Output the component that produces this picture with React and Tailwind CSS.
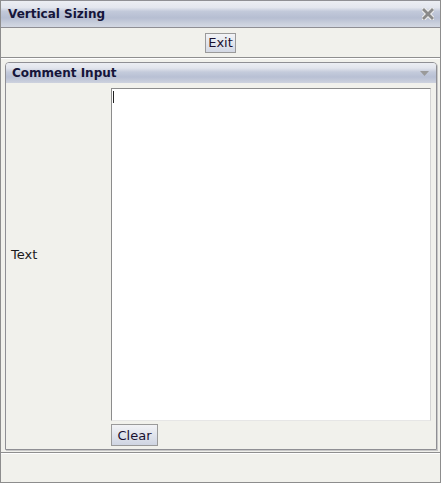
import React from "react";

const font = { fontFamily: '"DejaVu Sans", Verdana, sans-serif' };

function CloseIcon() {
  return (
    <svg width="12" height="12" viewBox="0 0 12 12">
      <path d="M2 2 L10 10 M10 2 L2 10" stroke="#ededed" strokeWidth="5" strokeLinecap="square" />
      <path d="M2 2 L10 10 M10 2 L2 10" stroke="#8a8a8a" strokeWidth="2.8" strokeLinecap="square" />
    </svg>
  );
}

function Tri() {
  return (
    <svg width="9" height="5" viewBox="0 0 9 5">
      <path d="M0 0 L9 0 L4.5 5 Z" fill="#9a9a9a" />
    </svg>
  );
}

export default function App() {
  return (
    <div
      className="w-[441px] h-[483px] flex flex-col bg-[#f1f1ec] border-l border-r border-b border-[#8d8d8d] text-[13px] text-[#1c1c1c] overflow-hidden"
      style={font}
    >
      <div className="h-[28px] shrink-0 flex items-center justify-between pl-[7px] pr-[6px] border-t border-b border-[#8f8f94] bg-[linear-gradient(to_bottom,#eceef3_0%,#e3e6ee_25%,#c2c9da_40%,#b6bed2_65%,#c9cfdc_85%,#d3d8e3_100%)]">
        <span className="font-bold text-[12px] text-[#15153a]">Vertical Sizing</span>
        <CloseIcon />
      </div>
      <div className="h-[30px] shrink-0 flex items-center justify-center border-b border-[#8f8f8f] shadow-[0_1px_0_#ffffff]">
        <button className="h-[20px] px-[2px] text-[13px] leading-none text-[#1a1030] border border-[#9a9a9a] bg-[linear-gradient(to_bottom,#f2f3f6,#d3d8e4)]" style={font}>
          Exit
        </button>
      </div>
      <div className="pt-[4px] pl-[4px] pr-[3px] shrink-0">
        <div className="h-[388px] flex flex-col border border-[#8f8f94] rounded-t-[4px] shadow-[1px_1px_0_#c8c8c8]">
          <div className="h-[20px] shrink-0 flex items-center justify-between pl-[6px] pr-[7px] rounded-t-[3px] bg-[linear-gradient(to_bottom,#eceef3_0%,#e2e5ed_25%,#c4cbdb_45%,#b8c0d4_70%,#cdd2de_100%)]">
            <span className="font-bold text-[12px] text-[#15153a]">Comment Input</span>
            <Tri />
          </div>
          <div className="flex-1 flex flex-col pt-[5px] pr-[5px]">
            <div className="flex h-[333px]">
              <div className="w-[105px] shrink-0 flex items-center pl-[5px]">
                <span className="text-[13px]">Text</span>
              </div>
              <div className="relative flex-1 bg-white border-l border-t border-[#8c8c8c] border-r border-r-[#d4d4d4] border-b border-b-[#e6e6e6]">
                <div className="absolute left-[1px] top-[2px] w-[1px] h-[12px] bg-[#222]" />
              </div>
            </div>
            <div className="pl-[105px] pt-[3px]">
              <button className="h-[22px] w-[47px] text-[13px] leading-none text-[#1a1030] border border-[#9a9a9a] bg-[linear-gradient(to_bottom,#f2f3f6,#cfd5e2)]" style={font}>
                Clear
              </button>
            </div>
          </div>
        </div>
      </div>
      <div className="mt-[2px] border-b border-[#8f8f8f] shadow-[0_1px_0_#ffffff]" />
      <div className="flex-1" />
    </div>
  );
}
